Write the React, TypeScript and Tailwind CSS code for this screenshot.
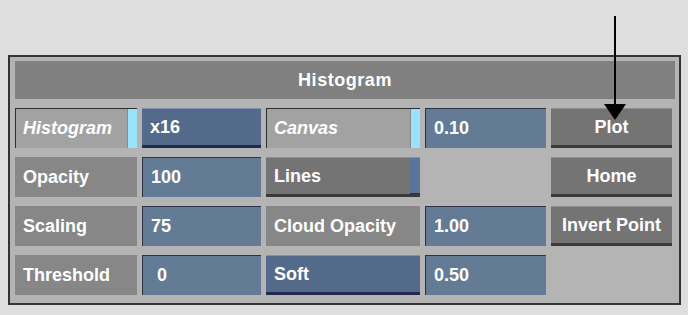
import React from "react";

const font = { fontFamily: '"Liberation Sans", Arial, sans-serif' };

function Label({ text }: { text: string }) {
  return (
    <div className="h-[40px] bg-[#878787] flex items-center pl-[8px] text-white">
      {text}
    </div>
  );
}

function Toggle({ text }: { text: string }) {
  return (
    <div className="h-[40px] flex bg-[#a2a2a2] border-t border-l border-[#2e2e2e]">
      <div className="flex-1 flex items-center pl-[7px] italic text-white">{text}</div>
      <div className="w-[10px] bg-[#9ae2fb] border-l border-[#8a8a8a]" />
    </div>
  );
}

function Field({ text, indent }: { text: string; indent?: boolean }) {
  return (
    <div
      className={`h-[40px] bg-[#637b95] border-t border-l border-[#2b3342] flex items-center text-white ${
        indent ? "pl-[14px]" : "pl-[8px]"
      }`}
    >
      {text}
    </div>
  );
}

function Pressed({ text }: { text: string }) {
  return (
    <div className="h-[40px] bg-[#546a8a] border-t border-[#7d92b3] border-b-[3px] border-b-[#242a4c] flex items-center pl-[8px] text-white">
      {text}
    </div>
  );
}

function Button({ text, strip }: { text: string; strip?: boolean }) {
  return (
    <div className="h-[40px] flex bg-[#747474] border-t border-[#909090] border-b-[3px] border-b-[#3a3a3a]">
      <div
        className={`flex-1 flex items-center text-white ${
          strip ? "pl-[8px]" : "justify-center"
        }`}
      >
        {text}
      </div>
      {strip && <div className="w-[10px] bg-[#5b7499] border-b-[1px] border-[#2a3050]" />}
    </div>
  );
}

export default function App() {
  return (
    <div
      className="relative w-[688px] h-[315px] bg-[#dedede] overflow-hidden pt-[55px] pl-[8px]"
      style={font}
    >
      <div className="w-[673px] h-[250px] border-2 border-[#333333] bg-[#b4b4b4] pt-[4px] pl-[5px] pr-[4px] flex flex-col gap-[9px] text-[18px] font-bold">
        <div className="h-[38px] bg-[#808080] flex items-center justify-center text-white tracking-[0.03em]">
          Histogram
        </div>
        <div className="grid grid-cols-[120px_121px_154px_121px_121px] auto-rows-[40px] gap-x-[5px] gap-y-[9px]">
          <div className="mr-[-2px]">
            <Toggle text="Histogram" />
          </div>
          <div className="ml-[2px]">
            <Pressed text="x16" />
          </div>
          <Toggle text="Canvas" />
          <Field text="0.10" />
          <Button text="Plot" />

          <div className="mr-[-2px]">
            <Label text="Opacity" />
          </div>
          <div className="ml-[2px]">
            <Field text="100" />
          </div>
          <Button text="Lines" strip />
          <div />
          <Button text="Home" />

          <div className="mr-[-2px]">
            <Label text="Scaling" />
          </div>
          <div className="ml-[2px]">
            <Field text="75" />
          </div>
          <Label text="Cloud Opacity" />
          <Field text="1.00" />
          <Button text="Invert Point" />

          <div className="mr-[-2px]">
            <Label text="Threshold" />
          </div>
          <div className="ml-[2px]">
            <Field text="0" indent />
          </div>
          <Pressed text="Soft" />
          <Field text="0.50" />
          <div />
        </div>
      </div>

      <svg className="absolute left-0 top-0" width="688" height="130" viewBox="0 0 688 130">
        <line x1="615" y1="16" x2="615" y2="106" stroke="#000" strokeWidth="2" />
        <polygon points="604,104 626,104 615,120" fill="#000" />
      </svg>
    </div>
  );
}
